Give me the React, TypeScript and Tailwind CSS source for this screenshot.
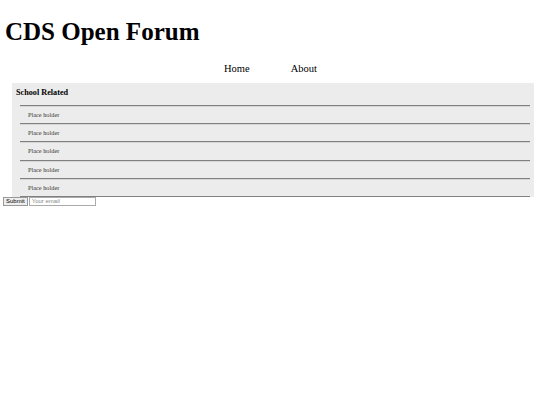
const items = ["Place holder", "Place holder", "Place holder", "Place holder", "Place holder"];

export default function App() {
  return (
    <div className="min-h-[405px] bg-white font-['Liberation_Serif','Times_New_Roman',serif] text-black">
      <h1 className="pl-[5px] pt-[17px] text-[25px] font-bold leading-[29px]">CDS Open Forum</h1>
      <nav className="mt-[17px] flex justify-center gap-[41px] text-[10.5px] leading-[12px]">
        <a href="#" className="ml-[1px]">Home</a>
        <a href="#">About</a>
      </nav>
      <div className="ml-[12px] mr-[6px] mt-[8px] bg-[#ececec]">
        <div className="px-[4px] pb-[7px] pt-[5px] text-[8.2px] font-bold leading-[10px]">School Related</div>
        <div className="pl-[8px] pr-[4px]">
          {items.map((item, i) => (
            <div key={i}>
              <div className="h-[2px] border-t border-[#808080] bg-[#d6d6d6]" />
              <div className="flex h-[16.2px] items-center pl-[8px] text-[6.3px] leading-[8px] text-[#333]">{item}</div>
            </div>
          ))}
          <div className="h-[1px] bg-[#808080]" />
        </div>
      </div>
      <form className="flex items-center gap-[1px] pl-[3px] font-['Liberation_Sans',Arial,sans-serif]">
        <button type="button" className="h-[9px] border border-[#999] bg-[#eee] px-[2px] text-[6px] leading-[7px]">Submit</button>
        <input placeholder="Your email" className="h-[9px] w-[67px] border border-[#aaa] px-[2px] text-[6px] leading-[7px] placeholder:text-[#888]" />
      </form>
    </div>
  );
}
